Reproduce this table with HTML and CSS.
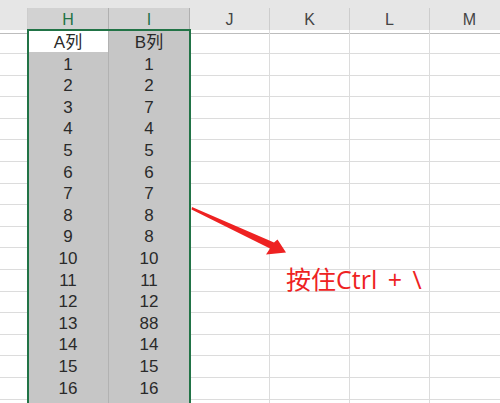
FILE: index.html
```html
<!DOCTYPE html>
<html lang="zh-CN">
<head>
    <meta charset="UTF-8">
    <meta name="viewport" content="width=device-width, initial-scale=1.0">
    <title>按住Ctrl + \</title>
    <link rel="stylesheet" href="styles.css">
</head>
<body>
    <div class="sheet">
        <div class="top-strip"></div>
        <div class="row head">
            <div class="hc"></div>
            <div class="hc sel">H</div>
            <div class="hc sel">I</div>
            <div class="hc">J</div>
            <div class="hc">K</div>
            <div class="hc">L</div>
            <div class="hc">M</div>
        </div>

        <div class="grid">
            <div class="row"><div class="c"></div><div class="c active">A列</div><div class="c sel">B列</div><div class="c"></div><div class="c"></div><div class="c"></div><div class="c"></div></div>
            <div class="row"><div class="c"></div><div class="c sel">1</div><div class="c sel">1</div><div class="c"></div><div class="c"></div><div class="c"></div><div class="c"></div></div>
            <div class="row"><div class="c"></div><div class="c sel">2</div><div class="c sel">2</div><div class="c"></div><div class="c"></div><div class="c"></div><div class="c"></div></div>
            <div class="row"><div class="c"></div><div class="c sel">3</div><div class="c sel">7</div><div class="c"></div><div class="c"></div><div class="c"></div><div class="c"></div></div>
            <div class="row"><div class="c"></div><div class="c sel">4</div><div class="c sel">4</div><div class="c"></div><div class="c"></div><div class="c"></div><div class="c"></div></div>
            <div class="row"><div class="c"></div><div class="c sel">5</div><div class="c sel">5</div><div class="c"></div><div class="c"></div><div class="c"></div><div class="c"></div></div>
            <div class="row"><div class="c"></div><div class="c sel">6</div><div class="c sel">6</div><div class="c"></div><div class="c"></div><div class="c"></div><div class="c"></div></div>
            <div class="row"><div class="c"></div><div class="c sel">7</div><div class="c sel">7</div><div class="c"></div><div class="c"></div><div class="c"></div><div class="c"></div></div>
            <div class="row"><div class="c"></div><div class="c sel">8</div><div class="c sel">8</div><div class="c"></div><div class="c"></div><div class="c"></div><div class="c"></div></div>
            <div class="row"><div class="c"></div><div class="c sel">9</div><div class="c sel">8</div><div class="c"></div><div class="c"></div><div class="c"></div><div class="c"></div></div>
            <div class="row"><div class="c"></div><div class="c sel">10</div><div class="c sel">10</div><div class="c"></div><div class="c"></div><div class="c"></div><div class="c"></div></div>
            <div class="row"><div class="c"></div><div class="c sel">11</div><div class="c sel">11</div><div class="c"></div><div class="c"></div><div class="c"></div><div class="c"></div></div>
            <div class="row"><div class="c"></div><div class="c sel">12</div><div class="c sel">12</div><div class="c"></div><div class="c"></div><div class="c"></div><div class="c"></div></div>
            <div class="row"><div class="c"></div><div class="c sel">13</div><div class="c sel">88</div><div class="c"></div><div class="c"></div><div class="c"></div><div class="c"></div></div>
            <div class="row"><div class="c"></div><div class="c sel">14</div><div class="c sel">14</div><div class="c"></div><div class="c"></div><div class="c"></div><div class="c"></div></div>
            <div class="row"><div class="c"></div><div class="c sel">15</div><div class="c sel">15</div><div class="c"></div><div class="c"></div><div class="c"></div><div class="c"></div></div>
            <div class="row"><div class="c"></div><div class="c sel">16</div><div class="c sel">16</div><div class="c"></div><div class="c"></div><div class="c"></div><div class="c"></div></div>
            <div class="row"><div class="c"></div><div class="c sel"></div><div class="c sel"></div><div class="c"></div><div class="c"></div><div class="c"></div><div class="c"></div></div>

            <!-- selected range H:I -->
            <div class="selection"></div>
        </div>

        <svg class="arrow" width="500" height="403" viewBox="0 0 500 403">
            <polygon points="192,207 274,242.5 277.5,239.5 286,252.5 266,254.5 270,248.5 191.5,209.5" fill="#ee2222"/>
        </svg>
        <div class="note">按住Ctrl + \</div>
    </div>
</body>
</html>
```

FILE: styles.css
```css
html, body {
    margin: 0;
    padding: 0;
    background-color: #ffffff;
}
body {
    font-family: 'Liberation Sans', 'Noto Sans CJK SC', sans-serif;
    color: #2a2a2a;
    overflow: hidden;
}
.sheet {
    position: relative;
    width: 500px;
    height: 403px;
    overflow: hidden;
}
.top-strip {
    height: 8px;
    background-color: #e6e6e6;
}
.row {
    display: grid;
    grid-template-columns: 28px 81px 81px 80px 80px 80px 80px;
    height: 21.6px;
}
.head {
    height: 22px;
    background-color: #e6e6e6;
}
.hc {
    box-sizing: border-box;
    border-right: 1px solid #cdcdcd;
    border-bottom: 1px solid #bdbdbd;
    font-size: 16px;
    line-height: 24px;
    text-align: center;
    color: #444444;
}
.hc.sel {
    background-color: #d2d2d2;
    color: #217346;
    border-right-color: #b0b0b0;
    border-bottom: 2px solid #217346;
}
.grid {
    position: relative;
}
.c {
    box-sizing: border-box;
    padding-top: 2px;
    border-right: 1px solid #dcdcdc;
    border-bottom: 1px solid #dcdcdc;
    font-size: 17px;
    line-height: 21px;
    text-align: center;
}
.c.sel {
    background-color: #c6c6c6;
    border-color: #b2b2b2;
}
.c.active {
    background-color: #ffffff;
    border-bottom-color: #b2b2b2;
    border-right-color: #b2b2b2;
}
.selection {
    position: absolute;
    left: 27px;
    top: -1px;
    width: 164px;
    height: 420px;
    box-sizing: border-box;
    border: 2px solid #217346;
    pointer-events: none;
}
.arrow {
    position: absolute;
    left: 0;
    top: 0;
}
.note {
    position: absolute;
    left: 286px;
    top: 263px;
    font-family: 'Open Sans', 'Noto Sans CJK SC', sans-serif;
    font-size: 25px;
    line-height: 32px;
    word-spacing: 4px;
    color: #ee2222;
    white-space: pre;
}
```
